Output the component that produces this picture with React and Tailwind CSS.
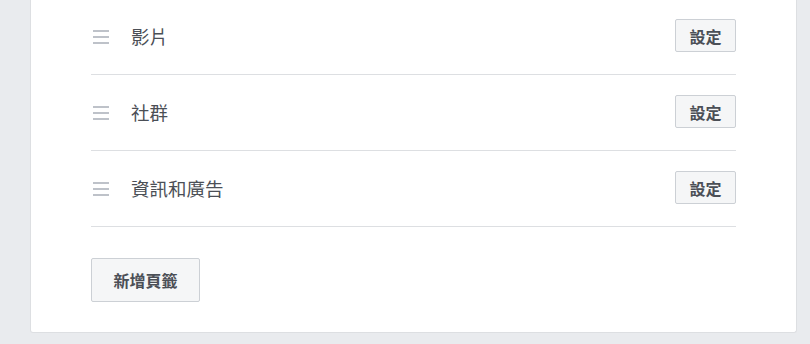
import React from "react";

const tabs = ["影片", "社群", "資訊和廣告"];

// drag handle: three short gray bars
const Handle = () => (
  <div className="flex w-[16px] flex-col gap-[4px] ml-[2px]">
    <span className="block h-[2px] w-full bg-[#bec2c9]" />
    <span className="block h-[2px] w-full bg-[#bec2c9]" />
    <span className="block h-[2px] w-full bg-[#bec2c9]" />
  </div>
);

const TabRow = ({ label }) => (
  <div className="flex h-[76px] items-center border-b border-[#dddfe2]">
    <Handle />
    <span className="ml-[22px] text-[18.5px] leading-none text-[#4b4f56]">{label}</span>
    <button className="ml-auto -mt-[2px] h-[33px] w-[61px] rounded-[2px] border border-[#ccd0d5] bg-[#f5f6f7] text-[16px] font-bold leading-none text-[#4b4f56]">
      設定
    </button>
  </div>
);

export default function App() {
  return (
    <main
      className="min-h-screen w-full overflow-hidden bg-[#e9ebee] pb-[11px]"
      style={{ fontFamily: '"Noto Sans CJK TC", "Noto Sans", sans-serif' }}
    >
      <section className="ml-[30px] -mt-[1px] w-[767px] rounded-b-[3px] border border-t-0 border-[#dddfe2] bg-white px-[60px] pb-[30px]">
        {tabs.map((t) => (
          <TabRow key={t} label={t} />
        ))}
        <button className="mt-[31px] h-[44px] w-[109px] rounded-[2px] border border-[#ccd0d5] bg-[#f5f6f7] text-[16px] font-bold leading-none text-[#4b4f56]">
          新增頁籤
        </button>
      </section>
    </main>
  );
}
